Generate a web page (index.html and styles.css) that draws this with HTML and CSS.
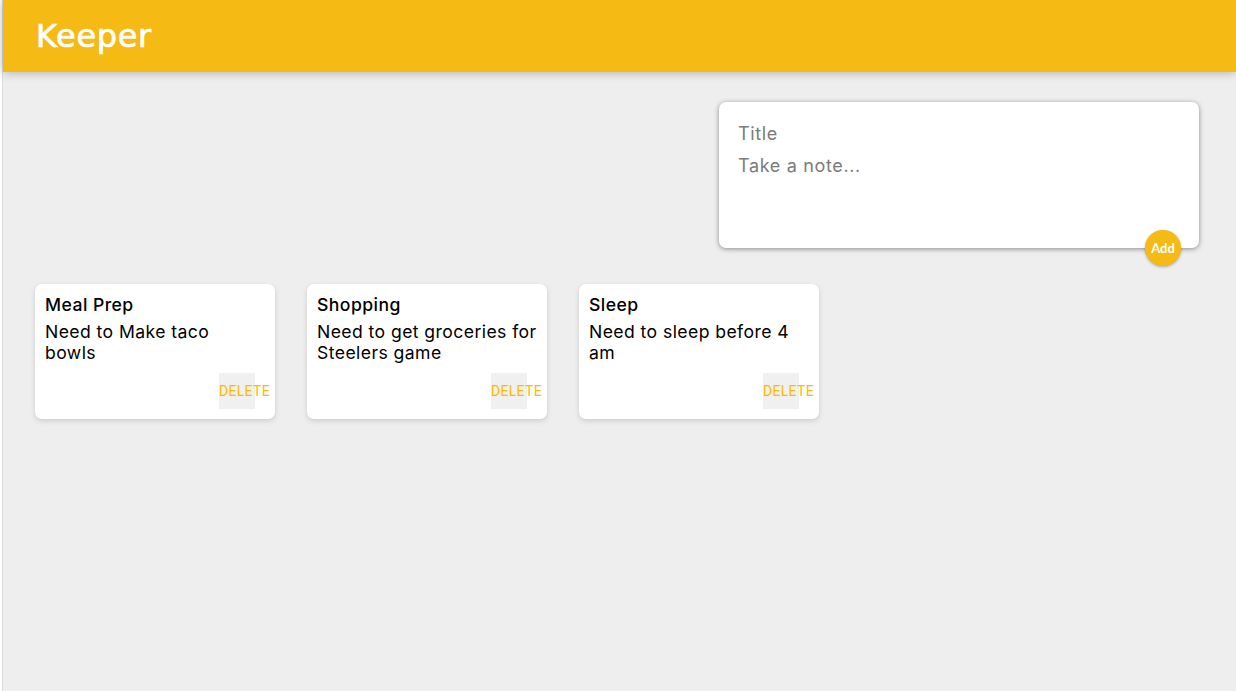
FILE: index.html
```html
<!DOCTYPE html>
<html lang="en">
<head>
<meta charset="utf-8">
<title>Keeper</title>
<link rel="stylesheet" href="styles.css">
</head>
<body>
<div class="frame">
  <header class="app-header"><h1 class="logo">Keeper</h1></header>
  <main class="content">
    <form class="create-note">
      <input class="field" type="text" placeholder="Title">
      <textarea class="field area" placeholder="Take a note..."></textarea>
      <button class="add" type="button">Add</button>
    </form>
    <section class="notes">
      <article class="note">
        <h2 class="note-title">Meal Prep</h2>
        <p class="note-body">Need to Make taco<br>bowls</p>
        <div class="note-actions"><button class="delete" type="button">DELETE</button></div>
      </article>
      <article class="note">
        <h2 class="note-title">Shopping</h2>
        <p class="note-body">Need to get groceries for Steelers game</p>
        <div class="note-actions"><button class="delete" type="button">DELETE</button></div>
      </article>
      <article class="note">
        <h2 class="note-title">Sleep</h2>
        <p class="note-body">Need to sleep before 4 am</p>
        <div class="note-actions"><button class="delete" type="button">DELETE</button></div>
      </article>
    </section>
  </main>
</div>
</body>
</html>
```
FILE: styles.css
```css
* { box-sizing: border-box; }
html, body { margin: 0; height: 100%; }
body { background: #fff; font-family: "Inter", "Liberation Sans", sans-serif; overflow: hidden; }
.frame { height: 691px; margin-left: 2px; border-left: 1px solid #dcdcdc; background: #eee; }
.app-header { height: 72px; background: #f5ba13; padding: 0 33px; display: flex; align-items: center; box-shadow: 0 0 10px rgba(0,0,0,.3); }
.logo { margin: 0; color: #fff; font: 400 32px "DejaVu Sans", sans-serif; letter-spacing: .65px; -webkit-text-stroke: .7px #fff; }
.content { display: flex; flex-direction: column; }
.create-note { position: relative; align-self: flex-end; width: 480px; height: 146px; margin: 30px 37px 36px 0; padding: 16px 19px; background: #fff; border-radius: 7px; box-shadow: 0 1px 5px rgb(138,138,138); }
.field { display: block; width: 100%; border: 0; outline: 0; padding: 4px 0; font: 400 18px/24px "Inter", sans-serif; letter-spacing: .65px; resize: none; background: transparent; }
.field::placeholder { color: #7b7b7b; opacity: 1; }
.area { height: 70px; }
.add { position: absolute; right: 18px; bottom: -18px; width: 36px; height: 36px; padding: 0; border: 0; border-radius: 50%; background: #f5ba13; color: #fff; font: 700 13px "Lato", sans-serif; box-shadow: 0 1px 3px rgba(0,0,0,.3); }
.notes { display: flex; gap: 32px; padding-left: 32px; }
.note { width: 240px; height: 135px; padding: 10px; background: #fff; border-radius: 7px; box-shadow: 0 2px 5px #ccc; }
.note-title { margin: 0 0 5px; font: 500 17.6px/22px "Inter", sans-serif; letter-spacing: .45px; color: #000; }
.note-body { margin: 0; font: 400 17.6px/21px "Inter", sans-serif; letter-spacing: .42px; color: #000; }
.note-actions { display: flex; justify-content: flex-end; }
.delete { width: 36px; height: 36px; margin: 10px 10px 0 0; padding: 0; border: 0; background: #f0f0f0; color: #ffb900; font: 400 14px "Roboto", sans-serif; letter-spacing: .3px; white-space: nowrap; display: flex; align-items: center; overflow: visible; }
```
